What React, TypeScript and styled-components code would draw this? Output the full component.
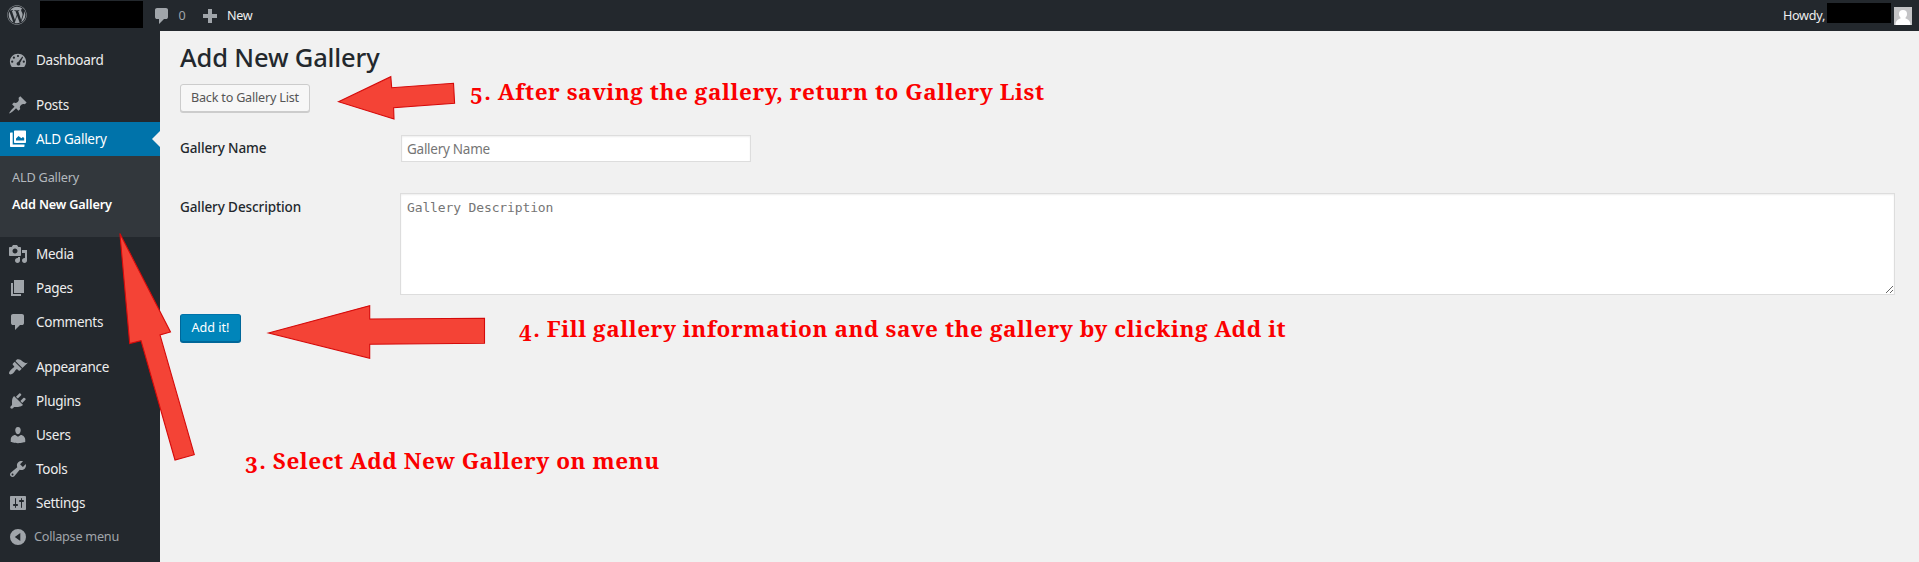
import React from 'react';
import styled, { createGlobalStyle, css } from 'styled-components';
import { FaWordpress } from 'react-icons/fa';

const GlobalStyle = createGlobalStyle`
  *, *::before, *::after { box-sizing: border-box; }
  body {
    margin: 0;
    background: #f1f1f1;
    color: #23282d;
    font: 13.5px/1.4 "Noto Sans", "Open Sans", sans-serif;
    letter-spacing: -0.26px;
    overflow: hidden;
  }
`;

const Page = styled.div`
  position: relative;
  display: flex;
  flex-direction: column;
  height: 562px;
`;

/* Admin bar */

const AdminBar = styled.header`
  display: flex;
  align-items: center;
  flex: none;
  height: 31px;
  padding: 0 8px 0 7px;
  background: #23282d;
  color: #eee;
  font-size: 12.6px;
`;

const WpMark = styled(FaWordpress)`
  flex: none;
  width: 20px;
  height: 20px;
  margin-bottom: 1px;
  color: #a0a5aa;
`;

const Redacted = styled.div<{ $width: number; $height: number }>`
  width: ${(p) => p.$width}px;
  height: ${(p) => p.$height}px;
  background: #000;
`;

const SiteName = styled.div`
  margin: 0 9px 2px 13px;
`;

const BarItem = styled.div<{ $muted?: boolean }>`
  display: flex;
  align-items: center;
  gap: 6.5px;
  margin-right: 15px;
  color: ${(p) => (p.$muted ? '#a0a5aa' : '#eee')};
`;

const Account = styled.div`
  display: flex;
  align-items: center;
  margin-left: auto;
`;

const AccountName = styled.div`
  margin: 0 3px 5px 2px;
`;

const Avatar = styled.svg`
  width: 18px;
  height: 18px;
  margin-right: -1px;
`;

/* Side menu */

const Body = styled.div`
  display: flex;
  flex: 1;
  min-height: 0;
`;

const SideMenu = styled.nav`
  flex: none;
  width: 160px;
  padding-top: 12px;
  background: #23282d;
`;

const MenuItem = styled.div<{ $active?: boolean; $muted?: boolean }>`
  position: relative;
  display: flex;
  align-items: center;
  gap: ${(p) => (p.$muted ? 6 : 8)}px;
  height: 34px;
  padding-left: 8px;
  color: ${(p) => (p.$muted ? '#a0a5aa' : p.$active ? '#fff' : '#eee')};
  ${(p) => p.$muted && css`font-size: 12.7px;`}
  ${(p) =>
    p.$active &&
    css`
      background: #0073aa;
      &::after {
        content: '';
        position: absolute;
        right: 0;
        top: 9px;
        border: 8px solid transparent;
        border-left: 0;
        border-right-color: #f1f1f1;
      }
    `}
`;

const Separator = styled.div`
  height: 11px;
`;

const SubMenu = styled.div`
  height: 81px;
  padding: 8px 12px;
  background: #32373c;
`;

const SubItem = styled.div<{ $current?: boolean }>`
  height: 27px;
  line-height: 27px;
  font-size: 12.7px;
  font-weight: ${(p) => (p.$current ? 600 : 400)};
  letter-spacing: -0.18px;
  color: ${(p) => (p.$current ? '#fff' : '#b4b9be')};
`;

const Dashicon = styled.svg<{ $color?: string }>`
  flex: none;
  width: 20px;
  height: 20px;
  fill: ${(p) => p.$color || '#a0a5aa'};
`;

/* Gallery form */

const Main = styled.main`
  flex: 1;
  padding: 9px 24px 0 20px;
`;

const Title = styled.h1`
  margin: 0 0 10px;
  font-size: 25.5px;
  font-weight: 500;
  line-height: 34px;
  letter-spacing: -0.16px;
`;

const buttonBase = css`
  display: block;
  padding: 0 10px;
  border-radius: 3px;
  font-family: inherit;
  font-size: 12.6px;
  line-height: 26px;
`;

const BackButton = styled.button`
  ${buttonBase}
  height: 28px;
  border: 1px solid #ccc;
  background: #f7f7f7;
  box-shadow: 0 1px 0 #ccc;
  color: #555;
  letter-spacing: -0.2px;
`;

const AddButton = styled.button`
  ${buttonBase}
  height: 28px;
  width: 61px;
  margin-top: 19px;
  border: 1px solid;
  border-color: #0073aa #006799 #006799;
  background: #0085ba;
  box-shadow: 0 1px 0 #006799;
  color: #fff;
  letter-spacing: 0;
`;

const FieldRow = styled.div<{ $top: number }>`
  display: grid;
  grid-template-columns: 220px 1fr;
  align-items: start;
  margin-top: ${(p) => p.$top}px;
`;

const Label = styled.label<{ $drop?: number }>`
  padding-top: ${(p) => 4 + (p.$drop || 0)}px;
  font-weight: 500;
  line-height: 18px;
  letter-spacing: -0.1px;
`;

const fieldBase = css`
  display: block;
  border: 1px solid #ddd;
  background: #fff;
  box-shadow: inset 0 1px 2px rgba(0, 0, 0, 0.07);
  &::placeholder { color: #757575; }
`;

const TextInput = styled.input`
  ${fieldBase}
  width: 350px;
  height: 27px;
  margin-left: 1px;
  padding: 2px 5px;
  font-family: inherit;
  font-size: 13.5px;
  letter-spacing: -0.26px;
`;

const TextArea = styled.textarea`
  ${fieldBase}
  width: 100%;
  height: 102px;
  padding: 4px 6px;
  font: 13px/19px "DejaVu Sans Mono", monospace;
  letter-spacing: -0.13px;
`;

/* Tutorial notes laid over the page */

const Arrows = styled.svg`
  position: absolute;
  inset: 0;
  width: 1919px;
  height: 562px;
  fill: #f44336;
  stroke: #d50a0a;
  stroke-width: 1.1;
  pointer-events: none;
`;

const Note = styled.p<{ $x: number; $y: number }>`
  position: absolute;
  left: ${(p) => p.$x}px;
  top: ${(p) => p.$y}px;
  margin: 0;
  color: #fb0000;
  font: bold 22.5px/30px "Noto Serif", "DejaVu Serif Condensed", "DejaVu Serif", serif;
  letter-spacing: 0.54px;
  white-space: nowrap;
`;

const OldStyleFigure = styled.span`
  position: relative;
  top: 4px;
  margin-right: 1px;
`;

const icons = {
  dashboard: 'M3.8 17h12.4c1.2-1.5 1.9-3.4 1.9-5.4C18.1 7.100 14.500 3.700 10 3.700S1.900 7.100 1.900 11.600c0 2 .7 3.900 1.900 5.400zM10 4.900a1.100 1.100 0 1 1 0 2.200 1.100 1.100 0 0 1 0-2.200zM5.900 6.600a1.100 1.100 0 1 1 0 2.200 1.100 1.100 0 0 1 0-2.200zM14.300 6.500l.8.800-3.100 5.600c.3.500.4 1 .2 1.500-.4 1.100-1.700 1.500-2.700.9-1-.6-1.200-2-.4-2.800.3-.3.700-.5 1.100-.6zM4.200 10.600a1.100 1.100 0 1 1 0 2.200 1.100 1.100 0 0 1 0-2.200zM15.800 10.600a1.100 1.100 0 1 1 0 2.200 1.100 1.100 0 0 1 0-2.200z',
  post: 'M10.440 3.020l1.820-1.820 6.360 6.350-1.830 1.820c-1.050-.68-2.480-.57-3.410.36l-.75.75c-.92.93-1.040 2.350-.35 3.410l-1.830 1.820-2.410-2.410-2.800 2.790c-.42.42-3.380 2.710-3.800 2.290s1.860-3.390 2.280-3.810l2.790-2.790L4.100 9.360l1.830-1.820c1.050.69 2.480.57 3.400-.36l.75-.75c.93-.92 1.050-2.350.36-3.410z',
  gallery: 'M7 1.500h10c.6 0 1 .4 1 1v10.500c0 .6-.4 1-1 1H7c-.6 0-1-.4-1-1V2.500c0-.6.4-1 1-1zM8 11.500h8.200V9l-1.300-1-1.500 1.200L10.500 7 8 9.600zM2 4.500c0-.6.4-1 1-1h1.700v12h11.800V17c0 .6-.4 1-1 1H3c-.6 0-1-.4-1-1z',
  media: 'M13 11V4c0-.55-.45-1-1-1h-1.670L9 1H5L3.670 3H2c-.55 0-1 .45-1 1v7c0 .55.45 1 1 1h10c.55 0 1-.45 1-1zM7 4.500c1.380 0 2.500 1.120 2.500 2.500S8.380 9.500 7 9.500 4.500 8.380 4.500 7 5.620 4.500 7 4.500zM14 6h5v10.500c0 1.380-1.120 2.500-2.500 2.500S14 17.880 14 16.500s1.120-2.500 2.500-2.500c.17 0 .34.02.5.05V9h-3V6zm-4 8.050V13h2v3.500c0 1.380-1.120 2.500-2.500 2.500S7 17.880 7 16.500 8.120 14 9.500 14c.17 0 .34.02.5.05z',
  page: 'M6 15V2h10v13H6zm-1 1h8v2H3V5h2v11z',
  comment: 'M5 2h9q.82 0 1.410.59T16 4v7q0 .82-.59 1.410T14 13h-2l-5 5v-5H5q-.82 0-1.410-.59T3 11V4q0-.82.59-1.410T5 2z',
  appearance: 'M14.480 11.060L7.410 3.990l1.500-1.500c.5-.56 2.300-.47 3.510.32 1.210.8 1.430 1.280 2.910 2.100 1.180.64 2.450 1.260 4.450.85zm-.71.71L6.700 4.700 4.930 6.470c-.39.39-.39 1.020 0 1.410l1.060 1.060c.39.39.39 1.030 0 1.420-.6.6-1.430 1.110-2.210 1.690-.35.26-.7.53-1.010.84C1.430 14.230.4 16.080 1.400 17.070c.99 1 2.840-.03 4.180-1.360.31-.31.58-.66.85-1.020.57-.78 1.080-1.610 1.690-2.210.39-.39 1.020-.39 1.410 0l1.060 1.060c.39.39 1.020.39 1.410 0z',
  plugins: 'M13.110 4.360L9.870 7.600 8 5.730l3.240-3.240c.35-.34 1.050-.2 1.560.32.52.51.66 1.210.31 1.550zm-8 1.770l.91-1.120 9.010 9.010-1.190.84c-.71.71-2.630 1.160-3.820 1.160H6.140L4.900 17.260c-.59.59-1.540.59-2.120 0-.59-.58-.59-1.530 0-2.120l1.240-1.240v-3.880c0-1.130.4-3.190 1.090-3.890zm7.260 3.970l3.240-3.240c.34-.35 1.040-.21 1.550.31.52.51.66 1.210.31 1.550l-3.240 3.250z',
  users: 'M10 9.250c-2.270 0-2.730-3.440-2.730-3.440C7 4.020 7.820 2 9.970 2c2.160 0 2.980 2.020 2.710 3.810 0 0-.41 3.440-2.680 3.440zm0 2.570L12.720 10c2.390 0 4.520 2.330 4.520 4.530v2.490s-3.650 1.130-7.240 1.130c-3.650 0-7.240-1.130-7.240-1.130v-2.490c0-2.250 1.940-4.480 4.470-4.480z',
  tools: 'M16.680 9.770c-1.340 1.340-3.300 1.670-4.950.99l-5.410 6.520c-.99.99-2.590.99-3.580 0s-.99-2.590 0-3.570l6.520-5.420c-.68-1.650-.35-3.610.99-4.950 1.280-1.280 3.120-1.620 4.720-1.060l-2.890 2.890 2.820 2.820 2.860-2.870c.53 1.580.18 3.390-1.080 4.650zM3.810 16.210c.4.39 1.040.39 1.430 0 .4-.4.4-1.040 0-1.430-.39-.4-1.030-.4-1.430 0-.39.39-.39 1.030 0 1.430z',
  settings: 'M18 16V4c0-.55-.45-1-1-1H3c-.55 0-1 .45-1 1v12c0 .55.45 1 1 1h14c.55 0 1-.45 1-1zM8 11h1c.55 0 1 .45 1 1s-.45 1-1 1H8v1.500c0 .28-.22.5-.5.5s-.5-.22-.5-.5V13H6c-.55 0-1-.45-1-1s.45-1 1-1h1V5.500c0-.28.22-.5.5-.5s.5.22.5.5V11zm5-2h-1c-.55 0-1-.45-1-1s.45-1 1-1h1V5.500c0-.28.22-.5.5-.5s.5.22.5.5V7h1c.55 0 1 .45 1 1s-.45 1-1 1h-1v5.500c0 .28-.22.5-.5.5s-.5-.22-.5-.5V9z',
  collapse: 'M10 2a8 8 0 1 0 0 16 8 8 0 0 0 0-16zM12.300 6v8l-5.500-4z',
  plus: 'M17 8v4h-5v5H8v-5H3V8h5V3h4v5z',
};

type IconName = keyof typeof icons;

const Icon = ({ name, color }: { name: IconName; color?: string }) => (
  <Dashicon viewBox="0 0 20 20" $color={color} aria-hidden>
    <path d={icons[name]} fillRule="evenodd" />
  </Dashicon>
);

const contentItems: [IconName, string][] = [
  ['media', 'Media'],
  ['page', 'Pages'],
  ['comment', 'Comments'],
];

const siteItems: [IconName, string][] = [
  ['appearance', 'Appearance'],
  ['plugins', 'Plugins'],
  ['users', 'Users'],
  ['tools', 'Tools'],
  ['settings', 'Settings'],
];

const Entry = ({ icon, label }: { icon: IconName; label: string }) => (
  <MenuItem>
    <Icon name={icon} />
    {label}
  </MenuItem>
);

export default function App() {
  return (
    <>
      <GlobalStyle />
      <Page>
        <AdminBar>
          <WpMark />
          <SiteName>
            <Redacted $width={103} $height={27} />
          </SiteName>
          <BarItem $muted>
            <Icon name="comment" />
            0
          </BarItem>
          <BarItem>
            <Icon name="plus" />
            New
          </BarItem>
          <Account>
            Howdy,
            <AccountName>
              <Redacted $width={64} $height={20} />
            </AccountName>
            <Avatar viewBox="0 0 18 18">
              <rect width="18" height="18" fill="#c4c4c6" />
              <circle cx="9" cy="7" r="4" fill="#fff" />
              <path d="M1.500 18c0-4 2.500-6 5-6.500V9h5v2.500c2.500.5 5 2.500 5 6.500z" fill="#fff" />
            </Avatar>
          </Account>
        </AdminBar>

        <Body>
          <SideMenu>
            <Entry icon="dashboard" label="Dashboard" />
            <Separator />
            <Entry icon="post" label="Posts" />
            <MenuItem $active>
              <Icon name="gallery" color="#fff" />
              ALD Gallery
            </MenuItem>
            <SubMenu>
              <SubItem>ALD Gallery</SubItem>
              <SubItem $current>Add New Gallery</SubItem>
            </SubMenu>
            {contentItems.map(([icon, label]) => (
              <Entry key={label} icon={icon} label={label} />
            ))}
            <Separator />
            {siteItems.map(([icon, label]) => (
              <Entry key={label} icon={icon} label={label} />
            ))}
            <MenuItem $muted>
              <Icon name="collapse" />
              Collapse menu
            </MenuItem>
          </SideMenu>

          <Main>
            <Title>Add New Gallery</Title>
            <BackButton>Back to Gallery List</BackButton>
            <FieldRow $top={23}>
              <Label htmlFor="name">Gallery Name</Label>
              <TextInput id="name" placeholder="Gallery Name" />
            </FieldRow>
            <FieldRow $top={31}>
              <Label htmlFor="description" $drop={1}>Gallery Description</Label>
              <TextArea id="description" placeholder="Gallery Description" />
            </FieldRow>
            <AddButton>Add it!</AddButton>
          </Main>
        </Body>

        <Arrows viewBox="0 0 1919 562" aria-hidden>
          <path d="M338.500 101.700L390.800 76.700 391.700 87.700 453.500 83.300 454.600 103.300 393.600 107.700 394 119z" />
          <path d="M268.500 333L369.700 305.600V319L484.500 318.300V343.300L369.700 344.300V358.300z" />
          <path d="M119.900 233.500L170.500 332 160 335 194.300 454.700 175 460 141 340.700 129.700 343.500z" />
        </Arrows>
        <Note $x={470} $y={77}>
          <OldStyleFigure>5</OldStyleFigure>. After saving the gallery, return to Gallery List
        </Note>
        <Note $x={519} $y={314}>
          <OldStyleFigure>4</OldStyleFigure>. Fill gallery information and save the gallery by clicking Add it
        </Note>
        <Note $x={245} $y={446}>
          <OldStyleFigure>3</OldStyleFigure>. Select Add New Gallery on menu
        </Note>
      </Page>
    </>
  );
}
